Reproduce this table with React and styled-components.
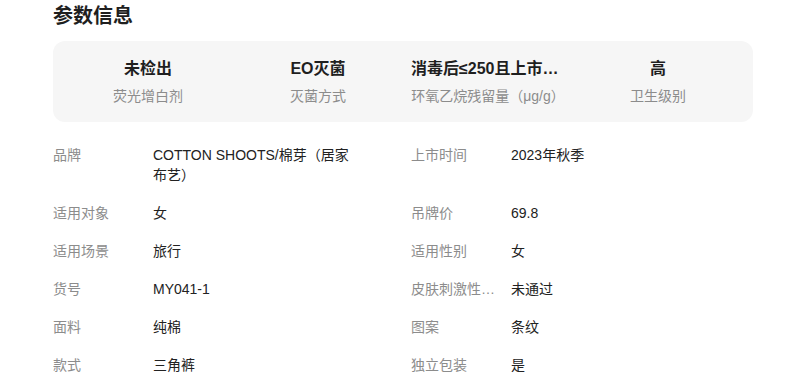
import React from 'react';
import styled, { createGlobalStyle } from 'styled-components';

const GlobalStyle = createGlobalStyle`
  body {
    margin: 0;
    background: #fff;
    font-family: "Liberation Sans", "Noto Sans CJK SC", sans-serif;
  }
`;

const Page = styled.div`
  width: 700px;
  margin: 0 auto;
  padding-top: 4px;
`;

const Title = styled.h2`
  margin: 0;
  font-size: 20px;
  line-height: 24px;
  font-weight: 700;
  color: #1f1f1f;
`;

const Card = styled.div`
  margin-top: 13px;
  height: 81px;
  padding: 0 10px;
  box-sizing: border-box;
  background: #f6f6f6;
  border-radius: 12px;
  display: grid;
  grid-template-columns: repeat(4, 1fr);
  align-items: center;
`;

const Stat = styled.div`
  display: flex;
  flex-direction: column;
  align-items: center;
  gap: 6px;
  min-width: 0;
  padding: 0 4px;
`;

const StatValue = styled.div`
  max-width: 154px;
  font-size: 16px;
  line-height: 22px;
  font-weight: 700;
  color: #1f1f1f;
  white-space: nowrap;
  overflow: hidden;
  text-overflow: ellipsis;
`;

const StatLabel = styled.div`
  font-size: 14px;
  line-height: 20px;
  color: #8c8c8c;
  white-space: nowrap;
`;

const Table = styled.div`
  margin-top: 23px;
  display: grid;
  grid-template-columns: 358px 1fr;
`;

const Row = styled.div`
  display: flex;
  align-items: flex-start;
  padding-bottom: 18px;
  font-size: 14px;
  line-height: 20px;
`;

const Label = styled.div`
  width: 88px;
  margin-right: 12px;
  flex-shrink: 0;
  color: #8c8c8c;
  white-space: nowrap;
  overflow: hidden;
  text-overflow: ellipsis;
`;

const Value = styled.div`
  width: 205px;
  color: #222;
`;

const stats = [
  { value: '未检出', label: '荧光增白剂' },
  { value: 'EO灭菌', label: '灭菌方式' },
  { value: '消毒后≤250且上市后≤10', label: '环氧乙烷残留量（μg/g）' },
  { value: '高', label: '卫生级别' },
];

const params = [
  ['品牌', 'COTTON SHOOTS/棉芽（居家布艺）'],
  ['上市时间', '2023年秋季'],
  ['适用对象', '女'],
  ['吊牌价', '69.8'],
  ['适用场景', '旅行'],
  ['适用性别', '女'],
  ['货号', 'MY041-1'],
  ['皮肤刺激性测试', '未通过'],
  ['面料', '纯棉'],
  ['图案', '条纹'],
  ['款式', '三角裤'],
  ['独立包装', '是'],
];

const App = () => (
  <Page>
    <GlobalStyle />
    <Title>参数信息</Title>
    <Card>
      {stats.map((s) => (
        <Stat key={s.label}>
          <StatValue>{s.value}</StatValue>
          <StatLabel>{s.label}</StatLabel>
        </Stat>
      ))}
    </Card>
    <Table>
      {params.map(([k, v]) => (
        <Row key={k}>
          <Label>{k}</Label>
          <Value>{v}</Value>
        </Row>
      ))}
    </Table>
  </Page>
);

export default App;
